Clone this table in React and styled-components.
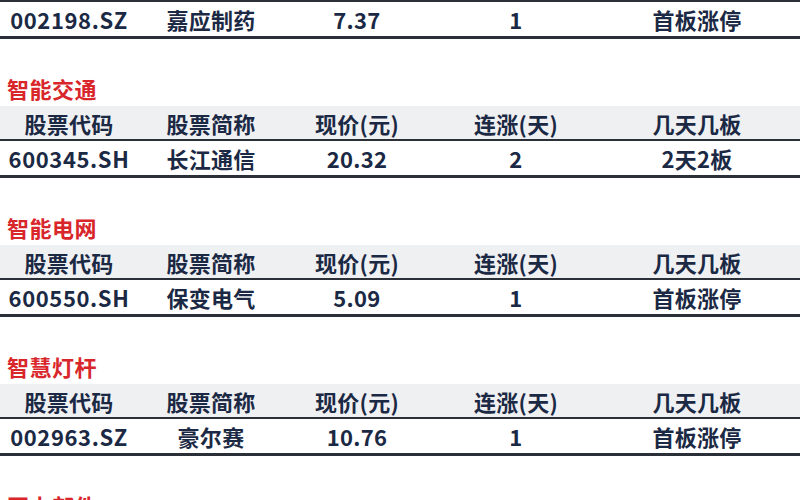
import React from 'react';
import styled, { createGlobalStyle } from 'styled-components';

const GlobalStyle = createGlobalStyle`
  html, body {
    margin: 0;
    padding: 0;
    background: #ffffff;
  }
  body {
    font-family: "Noto Sans CJK SC", "Noto Sans", sans-serif;
    overflow: hidden;
  }
`;

const COLUMNS = ['股票代码', '股票简称', '现价(元)', '连涨(天)', '几天几板'];

const SECTIONS = [
  { title: '智能制药', rows: [['002198.SZ', '嘉应制药', '7.37', '1', '首板涨停']] },
  { title: '智能交通', rows: [['600345.SH', '长江通信', '20.32', '2', '2天2板']] },
  { title: '智能电网', rows: [['600550.SH', '保变电气', '5.09', '1', '首板涨停']] },
  { title: '智慧灯杆', rows: [['002963.SZ', '豪尔赛', '10.76', '1', '首板涨停']] },
  { title: '再上部件', rows: [['000000.SZ', '', '', '', '']] },
];

const Page = styled.div`
  width: 800px;
  height: 500px;
  overflow: hidden;
  background: #ffffff;
`;

const Sheet = styled.div`
  margin-top: -69px;
  display: flex;
  flex-direction: column;
  gap: 31px;
`;

const Section = styled.section`
  display: flex;
  flex-direction: column;
`;

const Title = styled.h3`
  margin: 0;
  height: 36px;
  display: flex;
  align-items: center;
  padding-left: 7px;
  font-size: 22px;
  font-weight: 700;
  color: #d8262b;
  letter-spacing: 0.5px;
`;

const Row = styled.div`
  display: grid;
  grid-template-columns: 138px 146px 146px 172px 1fr;
  height: ${p => (p.$head ? '33px' : '34px')};
  align-items: center;
  background: ${p => (p.$head ? '#eff0f2' : '#ffffff')};
  border-bottom: ${p => (p.$head ? '2px' : '3px')} solid #2b2f38;
  font-size: 22px;
  font-weight: 700;
  color: #1b2944;
`;

const Cell = styled.div`
  text-align: center;
  white-space: nowrap;
  letter-spacing: ${p => (p.$code ? '0.6px' : '0.3px')};
  padding-right: ${p => (p.$last ? '8px' : '0')};
`;

function DataRow({ cells, head }) {
  return (
    <Row $head={head}>
      {cells.map((c, i) => (
        <Cell key={i} $code={!head && i === 0} $last={i === cells.length - 1}>
          {c}
        </Cell>
      ))}
    </Row>
  );
}

export default function App() {
  return (
    <Page>
      <GlobalStyle />
      <Sheet>
        {SECTIONS.map(s => (
          <Section key={s.title}>
            <Title>{s.title}</Title>
            <DataRow cells={COLUMNS} head />
            {s.rows.map((r, i) => (
              <DataRow key={i} cells={r} />
            ))}
          </Section>
        ))}
      </Sheet>
    </Page>
  );
}
